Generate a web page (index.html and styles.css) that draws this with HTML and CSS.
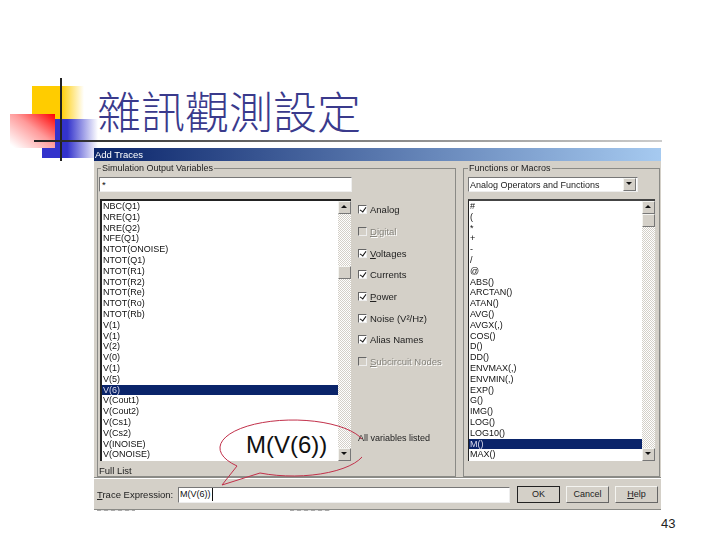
FILE: index.html
```html
<!DOCTYPE html>
<html lang="en">

<head>
    <meta charset="UTF-8" />
    <title>雜訊觀測設定</title>
    <link rel="stylesheet" href="styles.css">
</head>

<body>
    <div class="slide">
        <div class="deco deco-yellow"></div>
        <div class="deco deco-blue"></div>
        <div class="deco deco-red"></div>
        <div class="deco deco-vline"></div>
        <div class="deco deco-hline"></div>

        <h1 class="slide-title">雜訊觀測設定</h1>

        <div class="dialog">
            <div class="titlebar">Add Traces</div>

            <div class="main">
                <fieldset class="group group-left">
                    <legend>Simulation Output Variables</legend>
                    <div class="left-inner">
                        <div class="vars">
                            <div class="field filter">*</div>
                            <div class="listbox listbox-vars">
                                <ul class="items">
                                    <li>NBC(Q1)</li>
                                    <li>NRE(Q1)</li>
                                    <li>NRE(Q2)</li>
                                    <li>NFE(Q1)</li>
                                    <li>NTOT(ONOISE)</li>
                                    <li>NTOT(Q1)</li>
                                    <li>NTOT(R1)</li>
                                    <li>NTOT(R2)</li>
                                    <li>NTOT(Re)</li>
                                    <li>NTOT(Ro)</li>
                                    <li>NTOT(Rb)</li>
                                    <li>V(1)</li>
                                    <li>V(1)</li>
                                    <li>V(2)</li>
                                    <li>V(0)</li>
                                    <li>V(1)</li>
                                    <li>V(5)</li>
                                    <li class="sel">V(6)</li>
                                    <li>V(Cout1)</li>
                                    <li>V(Cout2)</li>
                                    <li>V(Cs1)</li>
                                    <li>V(Cs2)</li>
                                    <li>V(INOISE)</li>
                                    <li>V(ONOISE)</li>
                                </ul>
                                <div class="scrollbar">
                                    <div class="sb-btn sb-up"></div>
                                    <div class="sb-thumb thumb-vars"></div>
                                    <div class="sb-btn sb-down"></div>
                                </div>
                            </div>
                            <div class="full-list">Full List</div>
                        </div>

                        <div class="options">
                            <div class="opt"><span class="check on"></span><span>Analog</span></div>
                            <div class="opt off"><span class="check"></span><span><u>D</u>igital</span></div>
                            <div class="opt"><span class="check on"></span><span><u>V</u>oltages</span></div>
                            <div class="opt"><span class="check on"></span><span>Currents</span></div>
                            <div class="opt"><span class="check on"></span><span><u>P</u>ower</span></div>
                            <div class="opt"><span class="check on"></span><span>Noise (V²/Hz)</span></div>
                            <div class="opt"><span class="check on"></span><span>Alias Names</span></div>
                            <div class="opt off"><span class="check"></span><span><u>S</u>ubcircuit Nodes</span></div>
                            <div class="listed">All variables listed</div>
                        </div>
                    </div>
                </fieldset>

                <fieldset class="group group-right">
                    <legend>Functions or Macros</legend>
                    <div class="combo">
                        <span class="combo-text">Analog Operators and Functions</span>
                        <span class="sb-btn sb-down"></span>
                    </div>
                    <div class="listbox listbox-funcs">
                        <ul class="items">
                            <li>#</li>
                            <li>(</li>
                            <li>*</li>
                            <li>+</li>
                            <li>-</li>
                            <li>/</li>
                            <li>@</li>
                            <li>ABS()</li>
                            <li>ARCTAN()</li>
                            <li>ATAN()</li>
                            <li>AVG()</li>
                            <li>AVGX(,)</li>
                            <li>COS()</li>
                            <li>D()</li>
                            <li>DD()</li>
                            <li>ENVMAX(,)</li>
                            <li>ENVMIN(,)</li>
                            <li>EXP()</li>
                            <li>G()</li>
                            <li>IMG()</li>
                            <li>LOG()</li>
                            <li>LOG10()</li>
                            <li class="sel">M()</li>
                            <li>MAX()</li>
                        </ul>
                        <div class="scrollbar">
                            <div class="sb-btn sb-up"></div>
                            <div class="sb-thumb"></div>
                            <div class="sb-btn sb-down"></div>
                        </div>
                    </div>
                </fieldset>
            </div>

            <div class="bottom">
                <span class="expr-label"><u>T</u>race Expression:</span>
                <div class="field expr"><span class="expr-text">M(V(6))</span></div>
                <div class="btn btn-default">OK</div>
                <div class="btn">Cancel</div>
                <div class="btn"><u>H</u>elp</div>
            </div>

            <div class="callout">
                <svg class="callout-shape" viewBox="0 0 152 72" width="152" height="72">
                    <path d="M27 51 A73 28 0 1 1 50 58 L12 70 Z" fill="none" stroke="#c2304a" stroke-width="1" />
                </svg>
                <span class="callout-text">M(V(6))</span>
            </div>
        </div>

        <div class="scrap scrap-left"></div>
        <div class="scrap scrap-mid"></div>

        <div class="page-num">43</div>
    </div>
</body>

</html>
```

FILE: styles.css
```css
* {
    box-sizing: border-box;
}

body {
    margin: 0;
    background: #fff;
    font-family: 'Liberation Sans', Arial, sans-serif;
}

.slide {
    position: relative;
    width: 720px;
    height: 540px;
    overflow: hidden;
}

/* corner decoration of the slide template */
.deco {
    position: absolute;
}

.deco-yellow {
    left: 32px;
    top: 86px;
    width: 52px;
    height: 44px;
    background: linear-gradient(to right, #ffcc00 55%, #fff);
}

.deco-blue {
    left: 42px;
    top: 119px;
    width: 56px;
    height: 39px;
    background: linear-gradient(to right, #3333cc 45%, #fff);
}

.deco-red {
    left: 10px;
    top: 114px;
    width: 45px;
    height: 34px;
    background: linear-gradient(to bottom left, #ff0000, #ff9a9a 45%, #fff 95%);
}

.deco-vline {
    left: 60px;
    top: 78px;
    width: 2px;
    height: 83px;
    background: #222;
}

.deco-hline {
    left: 34px;
    top: 140px;
    width: 628px;
    height: 2px;
    background: linear-gradient(to right, #222, #777 45%, #ccc);
}

.slide-title {
    position: absolute;
    left: 97px;
    top: 78px;
    margin: 0;
    font-family: 'Noto Sans CJK TC', sans-serif;
    font-size: 44px;
    font-weight: 300;
    line-height: 64px;
    color: #3a3a8c;
}

.page-num {
    position: absolute;
    left: 661px;
    top: 516px;
    font-size: 13px;
    color: #222;
}

/* bits of the cropped picture showing below the dialog */
.scrap {
    position: absolute;
    top: 510px;
    height: 1px;
    background: repeating-linear-gradient(to right, #aaa 0 4px, #e4e4e4 4px 7px);
}

.scrap-left {
    left: 97px;
    width: 38px;
}

.scrap-mid {
    left: 290px;
    width: 40px;
}

/* the dialog */
.dialog {
    position: absolute;
    left: 94px;
    top: 148px;
    width: 567px;
    height: 362px;
    display: flex;
    flex-direction: column;
    background: #d4d0c8;
    border-bottom: 1px solid #8a8a86;
    font-size: 9.5px;
    color: #222;
}

.titlebar {
    height: 13px;
    padding-left: 1px;
    line-height: 13px;
    color: #fff;
    background: linear-gradient(to right, #0a246a, #a6caf0);
    filter: blur(0.3px);
}

.main {
    display: flex;
    gap: 7px;
    height: 317px;
    padding: 2px 0 0 3px;
    border-bottom: 1px solid #8a8a86;
    box-shadow: 0 1px 0 #fff;
}

.group {
    min-width: 0;
    margin: 0;
    padding: 0;
    border: 1px solid #8a8a86;
}

.group legend {
    padding: 0 1px;
    font-size: 9px;
    line-height: 11px;
    filter: blur(0.3px);
}

.group-left {
    width: 359px;
    padding-left: 1px;
}

.group-left legend {
    margin-left: 2px;
}

.group-right {
    width: 197px;
    padding-left: 4px;
}

.left-inner {
    display: flex;
    padding-top: 3px;
}

.vars {
    width: 253px;
}

.field {
    background: #fff;
    border: 1px solid;
    border-color: #777 #eee #eee #777;
    line-height: 13px;
    padding-left: 2px;
    color: #111;
}

.filter {
    height: 15px;
}

.listbox {
    display: flex;
    height: 262px;
    margin-top: 7px;
    background: #fff;
    border-top: 2px solid #222;
    border-left: 2px solid #222;
}

.listbox-vars {
    width: 251px;
    margin-left: 1px;
}

.listbox-funcs {
    width: 187px;
    border-top-color: #444;
    border-left-width: 1px;
}

.items {
    flex: 1;
    margin: 0;
    padding: 0;
    list-style: none;
    font-size: 9px;
    color: #111;
}

.items li {
    height: 10.8px;
    line-height: 10.8px;
    padding-left: 1px;
    filter: blur(0.3px);
}

.items .sel {
    background: #0a246a;
    color: #dde;
}

.scrollbar {
    display: flex;
    flex-direction: column;
    width: 13px;
    background: repeating-conic-gradient(#d4d0c8 0 25%, #fff 0 50%) 0 0 / 2px 2px;
}

.sb-btn,
.sb-thumb {
    flex: none;
    display: block;
    width: 13px;
    height: 13px;
    background: #d4d0c8;
    border-bottom: 1px solid #777;
    border-right: 1px solid #777;
    border-top: 1px solid #f4f4f0;
    border-left: 1px solid #f4f4f0;
}

.sb-btn {
    position: relative;
}

.sb-btn::after {
    content: "";
    position: absolute;
    left: 2px;
    top: 3px;
    border-left: 3px solid transparent;
    border-right: 3px solid transparent;
}

.sb-up::after {
    border-bottom: 3px solid #111;
}

.sb-down::after {
    border-top: 3px solid #111;
}

.scrollbar .sb-down {
    margin-top: auto;
}

.thumb-vars {
    margin-top: 52px;
}

.full-list {
    margin-top: 4px;
    line-height: 11px;
    filter: blur(0.3px);
}

.options {
    flex: 1;
    margin-left: 6px;
    padding-top: 22px;
}

.opt {
    display: flex;
    align-items: center;
    gap: 3px;
    height: 21.7px;
    filter: blur(0.2px);
}

.opt.off {
    color: #85837c;
    text-shadow: 1px 1px 0 #fff;
}

.check {
    position: relative;
    flex: none;
    width: 9px;
    height: 9px;
    background: #fff;
    border: 1px solid;
    border-color: #666 #eee #eee #666;
}

.opt.off .check {
    background: #d4d0c8;
}

.check.on::after {
    content: "";
    position: absolute;
    left: 2px;
    top: 0;
    width: 3px;
    height: 5px;
    border-right: 1.5px solid #111;
    border-bottom: 1.5px solid #111;
    transform: rotate(35deg);
}

.listed {
    margin-top: 60px;
    font-size: 9px;
    filter: blur(0.3px);
}

.combo {
    display: flex;
    align-items: center;
    justify-content: space-between;
    width: 170px;
    height: 15px;
    margin-top: 3px;
    padding: 0 1px 0 1px;
    background: #fff;
    border: 1px solid;
    border-color: #777 #eee #eee #777;
    font-size: 9px;
}

.combo-text {
    filter: blur(0.3px);
}

.bottom {
    display: flex;
    align-items: center;
    height: 30px;
    padding: 3px 3px 0;
}

.expr-label {
    width: 81px;
    filter: blur(0.3px);
}

.expr {
    width: 332px;
    height: 16px;
    margin-right: 7px;
    padding-left: 1px;
    font-size: 9px;
}

.expr-text {
    display: inline-block;
    border-right: 1px solid #111;
    padding-right: 1px;
}

.btn {
    width: 43px;
    height: 17px;
    margin-right: 6px;
    line-height: 15px;
    text-align: center;
    border: 1px solid;
    border-color: #f4f4f0 #666 #666 #f4f4f0;
    font-size: 9px;
}

.btn:last-child {
    margin-right: 0;
}

.btn-default {
    outline: 1px solid #222;
    outline-offset: -1px;
}

.callout {
    position: absolute;
    left: 116px;
    top: 267px;
    z-index: 1;
    width: 152px;
    height: 72px;
}

.callout-shape {
    display: block;
}

.callout-text {
    position: absolute;
    left: 36px;
    top: 16px;
    font-size: 24px;
    line-height: 28px;
    color: #111;
}
```
